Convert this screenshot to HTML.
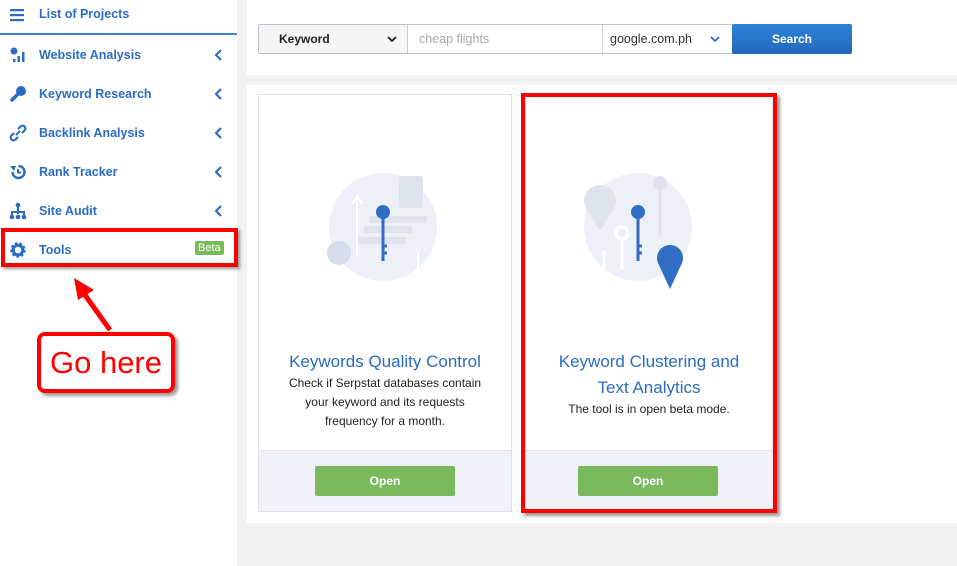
<!DOCTYPE html>
<html><head><style>
*{box-sizing:border-box;margin:0;padding:0}
body{width:957px;height:566px;background:#f2f2f2;font-family:"Liberation Sans",sans-serif;position:relative;overflow:hidden}
.side{position:absolute;left:0;top:0;width:237px;height:566px;background:#fff}
.it{position:absolute;left:0;width:237px;height:20px;color:#2b6cc4;font-size:12.5px;font-weight:bold}
.it .t{position:absolute;left:39px;top:3px}
.it .ch{position:absolute;left:215px;top:4px}
.it svg.ic{position:absolute;left:9px;top:1px}
.panel{position:absolute;background:#fff}
.card{position:absolute;top:94px;height:418px;background:#fff;border:1px solid #dde2ee}
.card .ft{position:absolute;left:0;right:0;bottom:0;height:61px;background:#f1f2f7;border-top:1px solid #e2e5ee}
.btn{position:absolute;top:15px;width:140px;height:30px;background:#7aba5c;border-radius:2px;color:#fff;font-weight:bold;font-size:12px;text-align:center;line-height:30px}
.title{position:absolute;left:0;right:0;text-align:center;color:#2b6cc4;font-size:17px}
.desc{position:absolute;left:0;right:0;text-align:center;color:#222;font-size:12px;line-height:19px}
</style></head><body>
<div class="side">
 <div class="it" style="top:5px"><svg class="ic" width="18" height="18"><rect x="1" y="3" width="14" height="2.2" fill="#2b6cc4"/><rect x="1" y="8" width="14" height="2.2" fill="#2b6cc4"/><rect x="1" y="13" width="14" height="2.2" fill="#2b6cc4"/></svg><span class="t" style="top:2px">List of Projects</span></div>
 <div style="position:absolute;left:0;top:33px;width:237px;height:2px;background:#3a7fd0"></div>
 <svg width="0" height="0" style="position:absolute"><defs><path id="cv" d="M6 1L1 6l5 5" stroke="#2b6cc4" stroke-width="2.2" fill="none"/></defs></svg>
 <div class="it" style="top:45px"><svg class="ic" width="18" height="18"><circle cx="5" cy="5" r="3.5" fill="#2b6cc4"/><rect x="4" y="13" width="2.5" height="3" fill="#2b6cc4"/><rect x="8.5" y="10" width="2.5" height="6" fill="#2b6cc4"/><rect x="13" y="6" width="2.5" height="10" fill="#2b6cc4"/></svg><span class="t">Website Analysis</span><svg class="ch" width="8" height="12"><use href="#cv"/></svg></div>
 <div class="it" style="top:84px"><svg class="ic" width="18" height="18"><circle cx="12" cy="6" r="5" fill="#2b6cc4"/><path d="M10 8L2 16" stroke="#2b6cc4" stroke-width="3.5"/></svg><span class="t">Keyword Research</span><svg class="ch" width="8" height="12"><use href="#cv"/></svg></div>
 <div class="it" style="top:123px"><svg class="ic" width="18" height="18"><path d="M7 11l4-4M5 9l-2.5 2.5a2.8 2.8 0 004 4L9 13M13 9l2.5-2.5a2.8 2.8 0 00-4-4L9 5" stroke="#2b6cc4" stroke-width="2.2" fill="none"/></svg><span class="t">Backlink Analysis</span><svg class="ch" width="8" height="12"><use href="#cv"/></svg></div>
 <div class="it" style="top:162px"><svg class="ic" width="18" height="18"><path d="M3.5 9a6 6 0 106-6" stroke="#2b6cc4" stroke-width="2.4" fill="none"/><path d="M9 6v3.5h3" stroke="#2b6cc4" stroke-width="2" fill="none"/><path d="M1 3h6l-2 5z" fill="#2b6cc4"/></svg><span class="t">Rank Tracker</span><svg class="ch" width="8" height="12"><use href="#cv"/></svg></div>
 <div class="it" style="top:201px"><svg class="ic" width="18" height="18"><circle cx="9" cy="3" r="2.3" fill="#2b6cc4"/><path d="M9 4v8M3 15V10h12v5" stroke="#2b6cc4" stroke-width="2" fill="none"/><circle cx="3" cy="15" r="2.3" fill="#2b6cc4"/><circle cx="9" cy="15" r="2.3" fill="#2b6cc4"/><circle cx="15" cy="15" r="2.3" fill="#2b6cc4"/></svg><span class="t">Site Audit</span><svg class="ch" width="8" height="12"><use href="#cv"/></svg></div>
 <div class="it" style="top:240px"><svg class="ic" width="18" height="18"><circle cx="9" cy="9" r="6" fill="none" stroke="#2b6cc4" stroke-width="3.5" stroke-dasharray="2.4 1.8"/><circle cx="9" cy="9" r="4.8" fill="none" stroke="#2b6cc4" stroke-width="3"/></svg><span class="t">Tools</span><span style="position:absolute;left:195px;top:1px;background:#7aba5c;color:#fff;font-weight:normal;font-size:11px;padding:1px 3px;border-radius:2px">Beta</span></div>
 <div style="position:absolute;left:1px;top:228px;width:237px;height:39px;border:4px solid #f00;box-shadow:2px 2px 3px rgba(0,0,0,.4)"></div>
 <svg style="position:absolute;left:60px;top:270px" width="70" height="70"><path d="M50 60L20 18" stroke="#f00" stroke-width="5"/><path d="M14 8L34 20L18 30z" fill="#f00"/></svg>
 <div style="position:absolute;left:37px;top:332px;width:138px;height:61px;border:4px solid #f00;border-radius:8px;background:#fff;box-shadow:3px 3px 3px rgba(0,0,0,.4);color:#f00;font-size:31px;text-align:center;line-height:53px">Go here</div>
</div>
<div class="panel" style="left:247px;top:0;width:710px;height:75px">
 <div style="position:absolute;left:11px;top:24px;width:593px;height:30px;border:1px solid #bfc4cc;border-radius:2px;background:#fff"></div>
 <div style="position:absolute;left:12px;top:25px;width:149px;height:28px;background:#f5f5f5;border-right:1px solid #c8ccd3;font-size:12px;font-weight:bold;color:#222;line-height:28px;padding-left:20px">Keyword<svg style="position:absolute;left:128px;top:11px" width="10" height="7"><path d="M1 1l4 4 4-4" stroke="#222" stroke-width="1.8" fill="none"/></svg></div>
 <div style="position:absolute;left:172px;top:25px;font-size:12.5px;color:#aaa;line-height:28px">cheap flights</div>
 <div style="position:absolute;left:355px;top:25px;width:130px;height:28px;border-left:1px solid #d0d3d8;font-size:12.5px;color:#333;line-height:28px;padding-left:7px">google.com.ph<svg style="position:absolute;left:107px;top:11px" width="10" height="7"><path d="M1 1l4 4 4-4" stroke="#2b6cc4" stroke-width="1.8" fill="none"/></svg></div>
 <div style="position:absolute;left:485px;top:24px;width:120px;height:30px;background:linear-gradient(#2f82d6,#2468be);border-radius:2px;color:#fff;font-size:12px;font-weight:bold;text-align:center;line-height:30px">Search</div>
</div>
<div class="panel" style="left:247px;top:85px;width:710px;height:438px"></div>
<div class="card" style="left:258px;width:254px">
 <svg style="position:absolute;left:68px;top:76px" width="120" height="120"><circle cx="56" cy="56" r="54" fill="#eef0f7"/><rect x="72" y="5" width="24" height="32" rx="3" fill="#dfe3ee"/><path d="M30 85V25l-5 8M30 25l5 8M91 80V110M86 102l5 8 5-8" stroke="#fff" stroke-width="2" fill="none"/><rect x="42" y="45" width="58" height="7" fill="#dfe3ee"/><rect x="37" y="55" width="48" height="7" fill="#dfe3ee"/><rect x="31" y="66" width="48" height="7" fill="#dfe3ee"/><circle cx="12" cy="82" r="12" fill="#d6dcea"/><circle cx="56" cy="41" r="7" fill="#2f6ec4"/><path d="M56 44v46M56 75h4M56 82h4" stroke="#2f6ec4" stroke-width="3"/></svg>
 <div class="title" style="top:257px">Keywords Quality Control</div>
 <div class="desc" style="top:279px">Check if Serpstat databases contain<br>your keyword and its requests<br>frequency for a month.</div>
 <div class="ft"><div class="btn" style="left:56px">Open</div></div>
</div>
<div class="card" style="left:525px;width:248px">
 <svg style="position:absolute;left:52px;top:76px" width="120" height="120"><circle cx="60" cy="56" r="54" fill="#eef0f7"/><circle cx="22" cy="30" r="16" fill="#dfe3ee"/><path d="M10 40L22 60 34 40z" fill="#dfe3ee"/><circle cx="82" cy="12" r="7" fill="#dfe3ee"/><path d="M82 16v50" stroke="#dfe3ee" stroke-width="3"/><circle cx="92" cy="87" r="13" fill="#2f6ec4"/><path d="M80 92L92 118 104 92z" fill="#2f6ec4"/><circle cx="60" cy="41" r="7" fill="#2f6ec4"/><path d="M60 44v46M60 75h4M60 82h4" stroke="#2f6ec4" stroke-width="3"/><circle cx="44" cy="62" r="6" fill="none" stroke="#fff" stroke-width="3"/><path d="M44 68v30M26 80v30" stroke="#fff" stroke-width="3"/></svg>
 <div class="title" style="top:254px;line-height:26px">Keyword Clustering and<br>Text Analytics</div>
 <div class="desc" style="top:305px">The tool is in open beta mode.</div>
 <div class="ft"><div class="btn" style="left:52px">Open</div></div>
</div>
<div style="position:absolute;left:521px;top:93px;width:256px;height:420px;border:4px solid #f00;box-shadow:3px 3px 3px rgba(0,0,0,.4)"></div>
</body></html>
